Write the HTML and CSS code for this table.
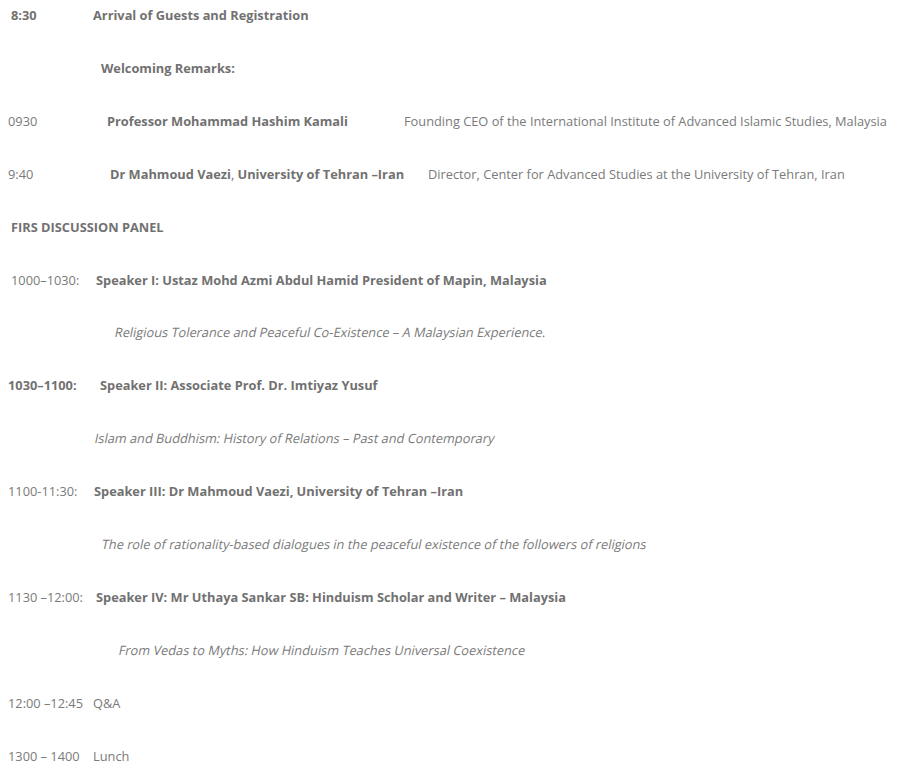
FILE: index.html
```html
<!DOCTYPE html>
<html lang="en">

<head>
    <meta charset="UTF-8">
    <meta name="viewport" content="width=device-width, initial-scale=1.0">
    <title>Programme</title>
    <link rel="stylesheet" href="styles.css">
</head>

<body>
    <div class="programme">
        <p class="row"><strong class="time t-11 w-82">8:30</strong><strong>Arrival of Guests and Registration</strong></p>
        <p class="row"><strong class="indent-101">Welcoming Remarks:</strong></p>
        <p class="row"><span class="time w-99">0930</span><strong class="w-297">Professor Mohammad Hashim Kamali</strong><span>Founding CEO of the International Institute of Advanced Islamic Studies, Malaysia</span></p>
        <p class="row"><span class="time w-102">9:40</span><strong class="w-318">Dr Mahmoud Vaezi<span class="plain">,</span> University of Tehran –Iran</strong><span>Director, Center for Advanced Studies at the University of Tehran, Iran</span></p>
        <p class="row"><strong class="t-11">FIRS DISCUSSION PANEL</strong></p>
        <p class="row"><span class="time t-11 w-85">1000–1030:</span><strong>Speaker I: Ustaz Mohd Azmi Abdul Hamid President of Mapin, Malaysia</strong></p>
        <p class="row"><em class="indent-115">Religious Tolerance and Peaceful Co-Existence – A Malaysian Experience.</em></p>
        <p class="row"><strong class="time w-92">1030–1100:</strong><strong>Speaker II: Associate Prof. Dr. Imtiyaz Yusuf</strong></p>
        <p class="row"><em class="indent-95">Islam and Buddhism: History of Relations – Past and Contemporary</em></p>
        <p class="row"><span class="time w-86">1100-11:30:</span><strong>Speaker III: Dr Mahmoud Vaezi, University of Tehran –Iran</strong></p>
        <p class="row"><em class="indent-102">The role of rationality-based dialogues in the peaceful existence of the followers of religions</em></p>
        <p class="row"><span class="time w-88">1130 –12:00:</span><strong>Speaker IV: Mr Uthaya Sankar SB: Hinduism Scholar and Writer – Malaysia</strong></p>
        <p class="row"><em class="indent-119">From Vedas to Myths: How Hinduism Teaches Universal Coexistence</em></p>
        <p class="row"><span class="time w-85">12:00 –12:45</span><span>Q&amp;A</span></p>
        <p class="row"><span class="time w-85">1300 – 1400</span><span>Lunch</span></p>
    </div>
</body>

</html>
```

FILE: styles.css
```css
body {
    margin: 0;
    padding: 2px 8px 0;
    font-family: "Open Sans", Arial, sans-serif;
    font-size: 12.8px;
    color: #7a7a7a;
    background: #fff;
}

.row {
    display: flex;
    align-items: baseline;
    margin: 0 0 26.46px;
    line-height: 26.46px;
    white-space: nowrap;
}

strong {
    font-weight: 700;
    color: #717171;
}

/* the original renders a slanted regular face, not the true italic */
em {
    display: inline-block;
    font-style: normal;
    transform: skewX(-12deg);
}

.plain {
    font-weight: 400;
}

.time {
    flex-shrink: 0;
}

.t-11 {
    margin-left: 3px;
}

.w-82 { width: 82px; }
.w-85 { width: 85px; }
.w-86 { width: 86px; }
.w-88 { width: 88px; }
.w-92 { width: 92px; }
.w-99 { width: 99px; }
.w-102 { width: 102px; }
.w-297 { width: 297px; }
.w-318 { width: 318px; }

.indent-95 { margin-left: 87px; }
.indent-101 { margin-left: 93px; }
.indent-102 { margin-left: 94px; }
.indent-115 { margin-left: 107px; }
.indent-119 { margin-left: 111px; }
```
